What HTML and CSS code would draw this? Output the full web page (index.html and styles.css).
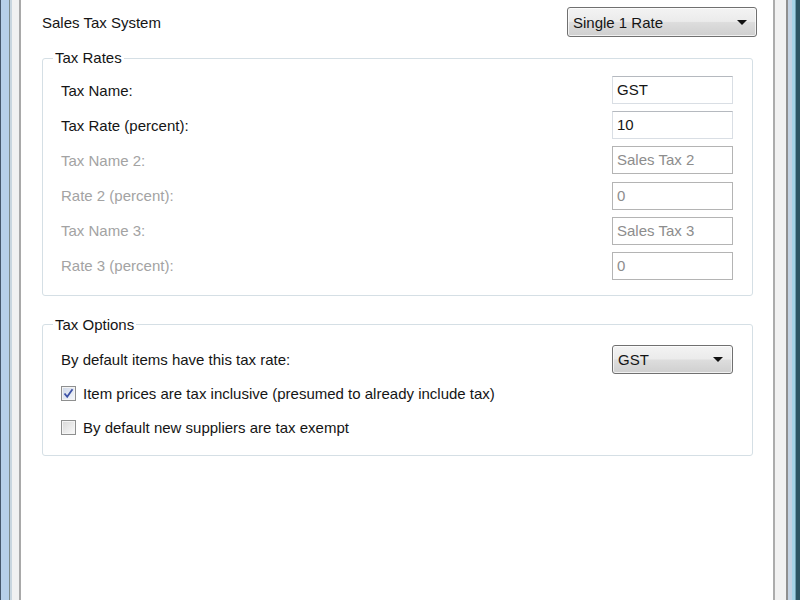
FILE: index.html
```html
<!DOCTYPE html>
<html lang="en">

<head>
    <meta charset="UTF-8">
    <meta name="viewport" content="width=device-width, initial-scale=1.0">
    <title>Sales Tax Settings</title>
    <link rel="stylesheet" href="styles.css">
</head>

<body>

    <div class="window">
        <div class="frame-left"></div>

        <div class="client">
            <div class="top-row">
                <span class="label">Sales Tax System</span>
                <div class="combo combo-wide">
                    <span>Single 1 Rate</span>
                    <span class="arrow"></span>
                </div>
            </div>

            <fieldset class="group">
                <legend>Tax Rates</legend>
                <div class="group-body rates">
                    <div class="row">
                        <span class="label">Tax Name:</span>
                        <div class="textbox">GST</div>
                    </div>
                    <div class="row">
                        <span class="label">Tax Rate (percent):</span>
                        <div class="textbox">10</div>
                    </div>
                    <div class="row disabled">
                        <span class="label">Tax Name 2:</span>
                        <div class="textbox">Sales Tax 2</div>
                    </div>
                    <div class="row disabled">
                        <span class="label">Rate 2 (percent):</span>
                        <div class="textbox">0</div>
                    </div>
                    <div class="row disabled">
                        <span class="label">Tax Name 3:</span>
                        <div class="textbox">Sales Tax 3</div>
                    </div>
                    <div class="row disabled">
                        <span class="label">Rate 3 (percent):</span>
                        <div class="textbox">0</div>
                    </div>
                </div>
            </fieldset>

            <fieldset class="group group-options">
                <legend>Tax Options</legend>
                <div class="group-body options">
                    <div class="row">
                        <span class="label">By default items have this tax rate:</span>
                        <div class="combo">
                            <span>GST</span>
                            <span class="arrow"></span>
                        </div>
                    </div>
                    <div class="check-row">
                        <span class="checkbox checked">
                            <svg width="11" height="11" viewBox="0 0 11 11">
                                <path d="M1.5 5.5 L4.2 8.8 L9.5 1.2" fill="none" stroke="#3d52a6" stroke-width="1.8" />
                            </svg>
                        </span>
                        <span class="label">Item prices are tax inclusive (presumed to already include tax)</span>
                    </div>
                    <div class="check-row">
                        <span class="checkbox"></span>
                        <span class="label">By default new suppliers are tax exempt</span>
                    </div>
                </div>
            </fieldset>
        </div>

        <div class="frame-right"></div>
    </div>

</body>

</html>
```

FILE: styles.css
```css
* {
    box-sizing: border-box;
}

body {
    margin: 0;
    padding: 0;
    font-family: 'Liberation Sans', Arial, sans-serif;
    font-size: 15px;
    color: #151515;
    background-color: #ffffff;
}

.window {
    display: flex;
    height: 600px;
    overflow: hidden;
}

.frame-left {
    width: 21px;
    flex-shrink: 0;
    background: linear-gradient(to right,
            #46566a 0 1px,
            #b7cfe8 1px 9px,
            #7d8b8c 9px 10px,
            #c9d6df 10px 12px,
            #f1f1f1 12px 19px,
            #a9a9a9 19px 21px);
}

.frame-right {
    width: 27px;
    flex-shrink: 0;
    background: linear-gradient(to right,
            #acacac 0 2px,
            #f1f1f1 2px 13px,
            #8f8f8f 13px 15px,
            #c3d2e2 15px 19px,
            #a5d3e6 19px 22px,
            #6d9fb0 22px 23px,
            #2c5563 23px 27px);
}

.client {
    flex: 1;
    background-color: #ffffff;
    padding: 7px 20px 0 21px;
}

.top-row {
    display: flex;
    justify-content: space-between;
    align-items: center;
    margin-right: -4px;
}

.combo {
    width: 121px;
    height: 29px;
    border: 1px solid #707070;
    border-radius: 3px;
    background: linear-gradient(#f3f3f3 0%, #ebebeb 48%, #dddddd 52%, #cfcfcf 100%);
    box-shadow: inset 0 0 0 1px rgba(255, 255, 255, 0.7);
    display: flex;
    align-items: center;
    justify-content: space-between;
    padding: 0 9px 0 5px;
    color: #151515;
}

.combo-wide {
    width: 190px;
    height: 30px;
}

.arrow {
    width: 0;
    height: 0;
    border-left: 5px solid transparent;
    border-right: 5px solid transparent;
    border-top: 5px solid #111;
}

.group {
    margin: 12px 0 0 0;
    padding: 0;
    border: 1px solid #d5dfe5;
    border-radius: 3px;
}

.group legend {
    margin-left: 10px;
    padding: 0 2px;
    line-height: 18px;
}

.group-body {
    padding: 9px 19px 15px 18px;
}

.rates {
    display: flex;
    flex-direction: column;
    gap: 7.2px;
}

.row {
    display: flex;
    justify-content: space-between;
    align-items: center;
}

.textbox {
    width: 121px;
    height: 28px;
    line-height: 26px;
    padding: 0 4px;
    border: 1px solid #d9dee4;
    border-top-color: #b5b9bf;
    background-color: #fff;
}

.disabled .label {
    color: #a3a3a3;
}

.disabled .textbox {
    border-color: #b4b4b4;
    color: #8d8d8d;
}

.group-options {
    margin-top: 20px;
}

.options {
    padding: 11px 19px 10px 18px;
}

.options .row {
    margin-bottom: 3px;
}

.check-row {
    display: flex;
    align-items: center;
    height: 34px;
    gap: 7px;
}

.checkbox {
    width: 15px;
    height: 15px;
    border: 1px solid #8e8f8f;
    background: linear-gradient(135deg, #d7d7d7, #fafafa);
    box-shadow: inset 0 0 0 1px #f4f4f4;
    display: flex;
    align-items: center;
    justify-content: center;
}

.checkbox.checked {
    background: linear-gradient(135deg, #cdd6e6, #f6f8fc);
}
```
